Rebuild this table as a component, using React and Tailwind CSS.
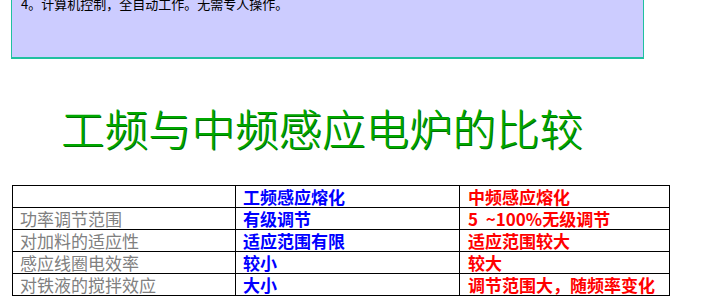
const rows = [
  { label: '', a: '工频感应熔化', b: '中频感应熔化' },
  { label: '功率调节范围', a: '有级调节', b: '5  ~100%无级调节' },
  { label: '对加料的适应性', a: '适应范围有限', b: '适应范围较大' },
  { label: '感应线圈电效率', a: '较小', b: '较大' },
  { label: '对铁液的搅拌效应', a: '大小', b: '调节范围大，随频率变化' },
];

const App = () => {
  return (
    <div className="w-[725px] h-[299px] overflow-hidden bg-white font-['Noto_Sans_CJK_SC','Noto_Sans',sans-serif]">
      {/* note box, top cut off */}
      <div className="ml-[11px] w-[633px] h-[62px] bg-[#ccccff] border-x border-b-2 border-[#20c0a0] pl-[9px]">
        <p className="-mt-[3px] text-[13px] leading-[13px] text-black">4。计算机控制，全自动工作。无需专人操作。</p>
      </div>

      <div className="h-[126px] pt-[47px] pl-[61px]">
        <h1 className="text-[43.5px] leading-[44px] font-light text-[#00a800] [text-shadow:1px_1px_0_#007000] whitespace-nowrap">
          工频与中频感应电炉的比较
        </h1>
      </div>

      <table className="ml-[12px] w-[657px] border-collapse table-fixed text-[17px] leading-[17px]">
        <colgroup>
          <col className="w-[223px]" />
          <col className="w-[224px]" />
          <col className="w-[210px]" />
        </colgroup>
        <tbody>
          {rows.map((r, i) => (
            <tr key={i} className="h-[22px]">
              <td className="border border-black pl-[7px] py-0 text-[#808080] whitespace-nowrap">{r.label}</td>
              <td className="border border-black pl-[7px] py-0 text-[#0000ff] font-bold whitespace-nowrap">{r.a}</td>
              <td className="border border-black pl-[8px] py-0 text-[#ff0000] font-bold whitespace-pre">{r.b}</td>
            </tr>
          ))}
        </tbody>
      </table>
    </div>
  );
};

export default App;
